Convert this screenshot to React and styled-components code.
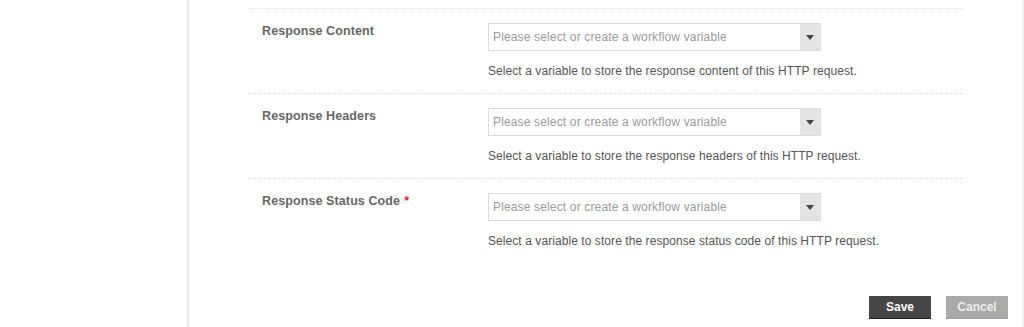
import React from "react";
import styled, { createGlobalStyle } from "styled-components";

const Global = createGlobalStyle`
  html, body { margin: 0; padding: 0; background: #fff; }
  body { font-family: "Liberation Sans", Arial, sans-serif; font-size: 12px; }
`;

const Page = styled.div`
  display: flex;
  height: 327px;
  overflow: hidden;
`;

const Sidebar = styled.div`
  width: 187px;
  flex: none;
  border-right: 2px solid #ebebeb;
`;

const Main = styled.div`
  flex: 1;
  display: flex;
  flex-direction: column;
  border-right: 2px solid #f0f0f0;
`;

const Form = styled.div`
  padding: 8px 59px 0 59px;
`;

const Row = styled.div`
  display: grid;
  grid-template-columns: 226px 1fr;
  border-top: 1px dashed #e2e2e2;
  padding: 14px 0 0 14px;
  height: 85px;
  box-sizing: border-box;
  &:first-child { border-top-style: dotted; }
`;

const Label = styled.div`
  font-weight: bold;
  color: #666;
  font-size: 12.5px;
  letter-spacing: 0.1px;
  padding-top: 1px;
`;

const Required = styled.span`
  color: #e02020;
  margin-left: 4px;
`;

const Field = styled.div`
  display: flex;
  flex-direction: column;
  gap: 13px;
`;

const Select = styled.div`
  display: flex;
  width: 333px;
  height: 28px;
  box-sizing: border-box;
  border: 1px solid #dcdcdc;
`;

const Placeholder = styled.div`
  flex: 1;
  color: #9a9a9a;
  padding-left: 4px;
  letter-spacing: 0.15px;
  display: flex;
  align-items: center;
`;

const Arrow = styled.div`
  width: 20px;
  background: #e4e4e4;
  display: flex;
  align-items: center;
  justify-content: center;
  &::after {
    content: "";
    border-left: 4px solid transparent;
    border-right: 4px solid transparent;
    border-top: 5px solid #444;
  }
`;

const Help = styled.div`
  color: #555;
  letter-spacing: 0.07px;
`;

const Actions = styled.div`
  display: flex;
  justify-content: flex-end;
  gap: 15px;
  padding: 33px 14px 0 0;
`;

const Button = styled.button`
  width: 62px;
  height: 23px;
  border: none;
  font-family: inherit;
  font-weight: bold;
  font-size: 12px;
  background: ${(p) => (p.$primary ? "#464646" : "#aaaaaa")};
  color: ${(p) => (p.$primary ? "#fff" : "#eee")};
  border-bottom: 1px solid ${(p) => (p.$primary ? "#222" : "#999")};
`;

const rows = [
  { label: "Response Content", help: "Select a variable to store the response content of this HTTP request." },
  { label: "Response Headers", help: "Select a variable to store the response headers of this HTTP request." },
  { label: "Response Status Code", required: true, help: "Select a variable to store the response status code of this HTTP request." },
];

export default function App() {
  return (
    <Page>
      <Global />
      <Sidebar />
      <Main>
        <Form>
          {rows.map((r) => (
            <Row key={r.label}>
              <Label>
                {r.label}
                {r.required && <Required>*</Required>}
              </Label>
              <Field>
                <Select>
                  <Placeholder>Please select or create a workflow variable</Placeholder>
                  <Arrow />
                </Select>
                <Help>{r.help}</Help>
              </Field>
            </Row>
          ))}
        </Form>
        <Actions>
          <Button $primary>Save</Button>
          <Button>Cancel</Button>
        </Actions>
      </Main>
    </Page>
  );
}
